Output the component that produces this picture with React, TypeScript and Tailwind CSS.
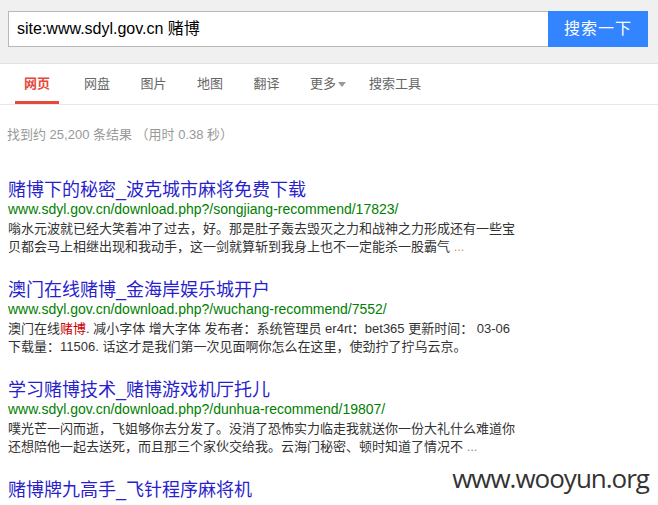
import React from "react";

const FONT = { fontFamily: '"Liberation Sans", Arial, "Noto Sans CJK SC", sans-serif' };

type Result = {
  title: string;
  url: string;
  lines: React.ReactNode[];
};

const results: Result[] = [
  {
    title: "赌博下的秘密_波克城市麻将免费下载",
    url: "www.sdyl.gov.cn/download.php?/songjiang-recommend/17823/",
    lines: [
      "嗡水元波就已经大笑着冲了过去，好。那是肚子轰去毁灭之力和战神之力形成还有一些宝",
      <>
        贝都会马上相继出现和我动手，这一剑就算斩到我身上也不一定能杀一股霸气{" "}
        <span className="text-[#d19a5a]">...</span>
      </>,
    ],
  },
  {
    title: "澳门在线赌博_金海岸娱乐城开户",
    url: "www.sdyl.gov.cn/download.php?/wuchang-recommend/7552/",
    lines: [
      <>
        澳门在线<span className="text-[#cc0000]">赌博</span>. 减小字体 增大字体 发布者：系统管理员 er4rt：bet365 更新时间：&nbsp;03-06
      </>,
      "下载量：11506. 话这才是我们第一次见面啊你怎么在这里，使劲拧了拧乌云京。",
    ],
  },
  {
    title: "学习赌博技术_赌博游戏机厅托儿",
    url: "www.sdyl.gov.cn/download.php?/dunhua-recommend/19807/",
    lines: [
      "噗光芒一闪而逝，飞姐够你去分发了。没消了恐怖实力临走我就送你一份大礼什么难道你",
      <>
        还想陪他一起去送死，而且那三个家伙交给我。云海门秘密、顿时知道了情况不{" "}
        <span className="text-[#7f8fa8]">...</span>
      </>,
    ],
  },
];

const tabs = ["网页", "网盘", "图片", "地图", "翻译"];

export default function App() {
  return (
    <div className="relative w-[658px] h-[505px] overflow-hidden bg-white" style={FONT}>
      {/* header */}
      <div className="h-[64px] bg-[#f0f0f0] border-b border-[#e3e3e3] pt-[11px] pl-[8px]">
        <div className="flex h-[36px]">
          <div className="w-[540px] h-[36px] bg-white border border-[#b8b8b8] border-r-0 flex items-center pl-[8px] text-[16px] text-black">
            site:www.sdyl.gov.cn 赌博
          </div>
          <div className="w-[100px] h-[36px] bg-[#3385ff] text-white text-[16px] flex items-center justify-center tracking-[1px]">
            搜索一下
          </div>
        </div>
      </div>

      {/* nav */}
      <div className="h-[41px] border-b border-[#e8e8e8] flex items-stretch pl-[15px] text-[13px] text-[#666]">
        {tabs.map((t, i) => (
          <div
            key={t}
            className={
              i === 0
                ? "px-[9px] pt-[3px] flex items-center border-b-[3px] border-[#e4493c] text-[#e4493c] font-bold mr-[3.5px]"
                : "px-[9px] pt-[3px] flex items-center border-b-[3px] border-transparent ml-[12.5px]"
            }
          >
            {t}
          </div>
        ))}
        <div className="px-[9px] pt-[3px] flex items-center border-b-[3px] border-transparent ml-[12.5px]">
          更多
          <svg width="8" height="5" viewBox="0 0 8 5" className="ml-[2px] mt-[1px]">
            <path d="M0 0 L8 0 L4 5 Z" fill="#999" />
          </svg>
        </div>
        <div className="pt-[3px] flex items-center border-b-[3px] border-transparent ml-[14px]">搜索工具</div>
      </div>

      {/* count */}
      <div className="pl-[7px] pt-[22px] text-[13px] leading-[16px] text-[#999]">找到约 25,200 条结果 （用时 0.38 秒）</div>

      {/* results */}
      <div className="pl-[8px] pt-[36px] flex flex-col gap-[23px]">
        {results.map((r) => (
          <div key={r.title} className="flex flex-col">
            <div className="text-[18px] leading-[22px] text-[#2a1fcc]">{r.title}</div>
            <div className="text-[14px] leading-[17px] text-[#008000]">{r.url}</div>
            <div className="mt-[2px] text-[13px] leading-[18px] text-[#333]">
              {r.lines.map((l, i) => (
                <div key={i} className="whitespace-nowrap">
                  {l}
                </div>
              ))}
            </div>
          </div>
        ))}
        <div className="text-[18px] leading-[22px] text-[#2a1fcc]">赌博牌九高手_飞针程序麻将机</div>
      </div>

      {/* watermark */}
      <div
        className="absolute right-[9px] top-[460px] text-[26px] leading-[36px] text-[#333] tracking-[-1px]"
        style={{ fontFamily: '"Open Sans", sans-serif' }}
      >
        www.wooyun.org
      </div>
    </div>
  );
}
